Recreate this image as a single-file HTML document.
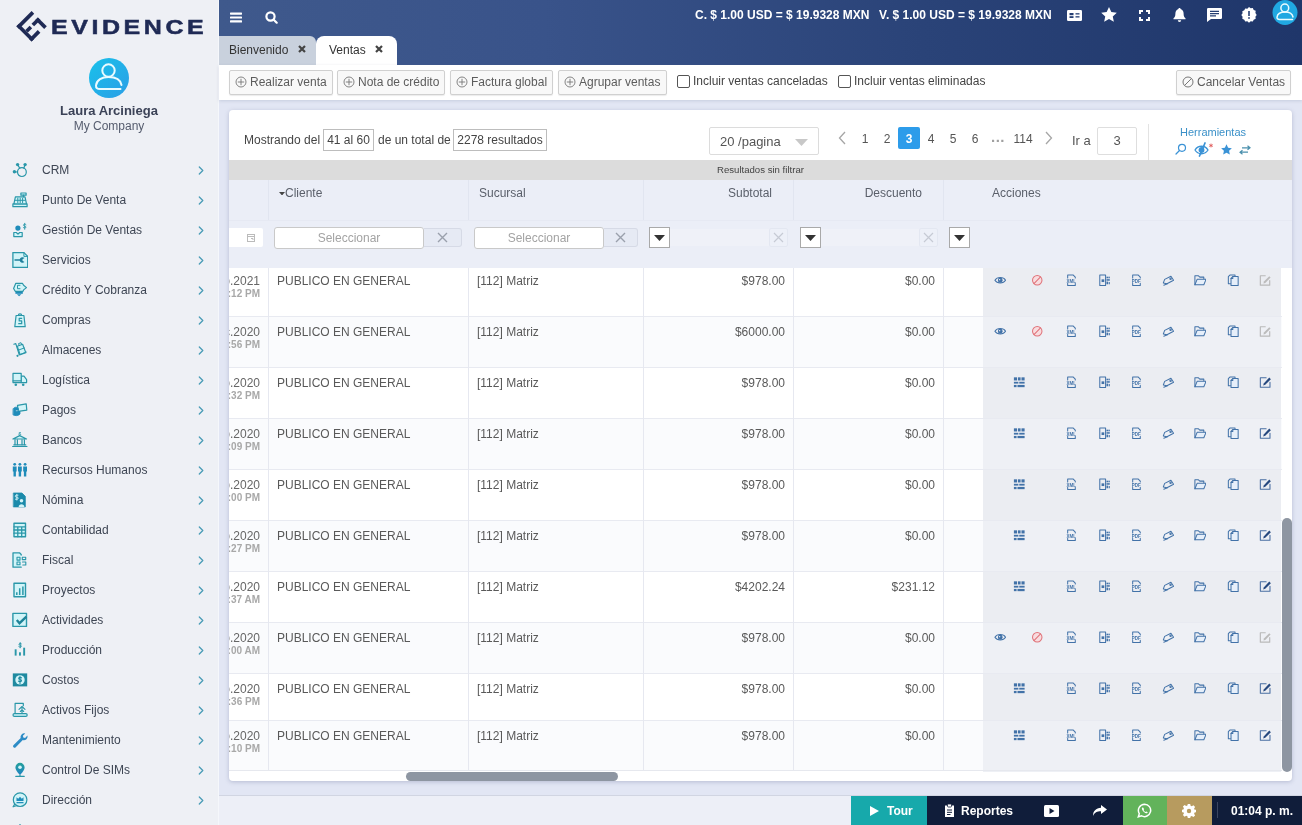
<!DOCTYPE html>
<html lang="es"><head><meta charset="utf-8"><title>Evidence - Ventas</title>
<style>
*{box-sizing:border-box;margin:0;padding:0}
html,body{width:1302px;height:825px;overflow:hidden}
#side,#top,#tb,#card,.bb{will-change:transform}
body{font-family:"Liberation Sans",Arial,sans-serif;font-size:12px;color:#4a4a4a;position:relative;background:#e2e6f4}
.abs{position:absolute}
#side{left:0;top:0;width:219px;height:825px;background:#eef0f5;border-right:1px solid #f5f7fb;overflow:hidden}
#logo-t{left:50.5px;top:12px;-webkit-text-stroke:.5px #1f2a55;font-size:20px;font-weight:700;color:#1f2a55;letter-spacing:2.85px;white-space:nowrap;line-height:30px;transform-origin:0 50%;transform:scaleX(1.25)}
#uname{left:0;width:218px;top:103px;text-align:center;font-weight:700;font-size:13px;color:#3b4257;line-height:15px}
#ucomp{left:0;width:218px;top:119px;text-align:center;font-size:12px;color:#555c6e;line-height:14px}
.mi{position:absolute;left:0;width:219px;height:30px}
.mi svg.i{position:absolute;left:11.5px;top:7px}
.mi span{position:absolute;left:42px;top:0;line-height:30px;font-size:12px;color:#3e4654;white-space:nowrap}
.mi svg.ch{position:absolute;left:197px;top:10px}
#top{left:219px;top:0;width:1083px;height:65px;background:linear-gradient(90deg,#3f598c 0%,#39538a 30%,#2a4378 65%,#1f366a 100%)}
#top .rate{position:absolute;top:8px;line-height:14px;font-size:12px;font-weight:700;color:#fff;white-space:nowrap}
.tab{position:absolute;top:36px;height:29px;line-height:28px;font-size:12px;color:#333;white-space:nowrap}
#tb{left:219px;top:65px;width:1083px;height:35px;background:#fff;box-shadow:0 1px 3px rgba(120,130,160,.25)}
.btn{position:absolute;top:5px;height:25px;border:1px solid #d0d0d0;background:#f8f8f8;border-radius:2px;font-size:12px;color:#5c5c5c;line-height:23px;white-space:nowrap;padding-left:20px;box-shadow:0 1px 1px rgba(0,0,0,.08)}
.btn svg{position:absolute;left:5px;top:5px}
.cb{position:absolute;top:10px;width:13px;height:13px;border:1px solid #555;border-radius:2px;background:#fff}
.cbl{position:absolute;top:0;line-height:33px;font-size:12px;color:#444;white-space:nowrap}
#card{left:229px;top:110px;width:1063px;height:671px;background:#fff;border-radius:4px;box-shadow:0 1px 4px rgba(100,110,150,.35);overflow:hidden}
.box{position:absolute;border:1px solid #bdbdbd;height:22px;line-height:20px;text-align:center;color:#444;font-size:12px;white-space:nowrap}
.pg{position:absolute;top:17px;width:22px;height:22px;line-height:24px;text-align:center;font-size:12px;color:#555}
#strip{left:0;top:50px;width:1063px;height:20px;background:#dcdcdc}
#hdr{left:0;top:70px;width:1063px;height:40px;background:#ebeef7}
#flt{left:0;top:110px;width:1063px;height:48px;z-index:2;background:#ebeef7;border-top:1px solid #e6e9f3}
.hc{position:absolute;top:0;line-height:26px;font-size:12px;color:#5a5f6a;white-space:nowrap}
.vl{position:absolute;top:70px;width:1px;height:591px;background:linear-gradient(#e1e5f0 0,#e1e5f0 88px,#e6e8f0 88px)}
.row{position:absolute;left:0;width:1053px;border-top:1px solid #e8eaf1}
.row div{position:absolute;white-space:nowrap;font-size:12px;color:#595959;line-height:14px}
.row .d1{right:1022px;top:8px;color:#666}
.row .d2{right:1022px;top:22px;font-size:10px;font-weight:700;color:#a8a8a8;line-height:12px}
.row .act{left:754px;top:0;width:298px;background:#ebedf3}
.row .act svg{position:absolute;top:8px}
#bot{left:219px;top:795px;width:1083px;height:30px;background:#edeff7;border-top:1px solid #d1d5e2}
.bb{position:absolute;top:796px;height:29px;color:#fff;font-weight:700;font-size:12px;line-height:31px;white-space:nowrap}
</style></head><body>
<div id="side" class="abs"><svg class="abs" style="left:14px;top:9px" width="35" height="35" viewBox="-17.5 -17.5 35 35"><g transform="translate(0.1,-0.2) rotate(-45)" fill="#1f2a55"><rect x="-10.75" y="-10.75" width="21.5" height="3.7"/><rect x="-10.75" y="-10.75" width="3.7" height="21.5"/><rect x="-10.75" y="7.05" width="12.4" height="3.7"/><rect x="-7.05" y="-1.85" width="6" height="3.7"/><rect x="1.75" y="-1.85" width="9" height="3.7"/><rect x="7.05" y="-1.85" width="3.7" height="12.6"/></g></svg><div id="logo-t" class="abs">EVIDENCE</div><svg class="abs" style="left:89px;top:58px" width="40" height="40" viewBox="0 0 40 40"><defs><linearGradient id="ag" x1="0" y1="0" x2="1" y2="1"><stop offset="0" stop-color="#19c1ea"/><stop offset="1" stop-color="#2b9ee6"/></linearGradient><linearGradient id="pg" x1="0" y1="0" x2="0" y2="1"><stop offset="0" stop-color="#25a09a"/><stop offset="1" stop-color="#1f84c4"/></linearGradient></defs><circle cx="20" cy="20" r="20" fill="url(#ag)"/><g fill="none" stroke="#e9fbff" stroke-width="2" stroke-linecap="round"><circle cx="19.500" cy="12.500" r="6.200"/><path d="M32.500 27c-1-5.500-6.500-8-13-8S7.500 22 7 27.500c-.2 2.500 1.500 3.500 4 3.500h20.500"/></g></svg><div id="uname" class="abs">Laura Arciniega</div><div id="ucomp" class="abs">My Company</div><div class="mi" style="top:155px"><svg class="i" width="16" height="16" viewBox="0 0 16 16" fill="none" stroke="#2a97a9" stroke-width="1.2" stroke-linecap="round" stroke-linejoin="round"><circle cx="9.900" cy="10.100" r="4.400"/><path d="M5.600 2.600l2.200 3.700M13.100 2.600l-1.300 3.600M2.400 9.800l3.100.2"/><g fill="#2a97a9" stroke="none"><circle cx="5.600" cy="2.600" r="1.700"/><circle cx="13.100" cy="2.600" r="1.700"/><circle cx="2.400" cy="9.800" r="1.700"/></g></svg><span>CRM</span><svg class="ch" width="8" height="11" viewBox="0 0 8 11" fill="none" stroke="#4a9cb6" stroke-width="1.300" stroke-linecap="round" stroke-linejoin="round"><path d="M2.300 2l3.500 3.500L2.300 9"/></svg></div><div class="mi" style="top:185px"><svg class="i" width="16" height="16" viewBox="0 0 16 16" fill="none" stroke="#2a97a9" stroke-width="1.2" stroke-linecap="round" stroke-linejoin="round"><rect x=".9" y="11.900" width="14.200" height="2.800" fill="#d2f4f8"/><path d="M3.400 4.800h9.600l1.500 7.100H1.900z" fill="#d2f4f8"/><path d="M5.800 6.200v4.400M8.200 6.200v4.400M10.600 6.200v4.400M3.200 8.300h10" stroke-width="1"/><rect x="8.900" y="1" width="5.200" height="2.200" fill="#d2f4f8"/><path d="M11.500 3.200v1.600"/></svg><span>Punto De Venta</span><svg class="ch" width="8" height="11" viewBox="0 0 8 11" fill="none" stroke="#4a9cb6" stroke-width="1.300" stroke-linecap="round" stroke-linejoin="round"><path d="M2.300 2l3.500 3.500L2.300 9"/></svg></div><div class="mi" style="top:215px"><svg class="i" width="16" height="16" viewBox="0 0 16 16" fill="none" stroke="#2a97a9" stroke-width="1.2" stroke-linecap="round" stroke-linejoin="round"><circle cx="5.900" cy="6.100" r="2.600" fill="#1f8cba" stroke="none"/><path d="M14 2.600c-.5-.6-2.500-.7-2.600.5s2.600.8 2.600 2-2.200 1.100-2.800.4M12.700 1.300v6" stroke-width=".9"/><path d="M1.800 10.500h2.500l1.700 1.700 1.700-1.700h2.500v4.100H1.800z" fill="#d2f4f8"/></svg><span>Gestión De Ventas</span><svg class="ch" width="8" height="11" viewBox="0 0 8 11" fill="none" stroke="#4a9cb6" stroke-width="1.300" stroke-linecap="round" stroke-linejoin="round"><path d="M2.300 2l3.500 3.500L2.300 9"/></svg></div><div class="mi" style="top:245px"><svg class="i" width="16" height="16" viewBox="0 0 16 16" fill="none" stroke="#2a97a9" stroke-width="1.2" stroke-linecap="round" stroke-linejoin="round"><path d="M.9.600h11l3.800 3.800v11H.9z" fill="#d2f4f8" stroke-width="1.300"/><path d="M11.900.6v3.800h3.800" stroke-width="1"/><path d="M2.500 7.200h5.200a3 3 0 014.800-1.300l-2 1.300v1.600l2 1.300a3 3 0 01-4.800-1.300H2.500z" fill="#1f7f9c" stroke="none"/></svg><span>Servicios</span><svg class="ch" width="8" height="11" viewBox="0 0 8 11" fill="none" stroke="#4a9cb6" stroke-width="1.300" stroke-linecap="round" stroke-linejoin="round"><path d="M2.300 2l3.500 3.500L2.300 9"/></svg></div><div class="mi" style="top:275px"><svg class="i" width="16" height="16" viewBox="0 0 16 16" fill="none" stroke="#2a97a9" stroke-width="1.2" stroke-linecap="round" stroke-linejoin="round"><path d="M3.800 1.300h6.600l1.200 2 2.900 2.300-2.900 2.300-.6 1.400H3.200L1.600 6.500z" fill="#d2f4f8"/><path d="M8 3.300H5.500v3.400H8" stroke-width="1"/><rect x="3.400" y="9.900" width="7.400" height="1.900" fill="#1f8cba" stroke="none"/><path d="M4.800 12.300h4.600l-2.300 2z" fill="#1f8cba" stroke="none"/></svg><span>Crédito Y Cobranza</span><svg class="ch" width="8" height="11" viewBox="0 0 8 11" fill="none" stroke="#4a9cb6" stroke-width="1.300" stroke-linecap="round" stroke-linejoin="round"><path d="M2.300 2l3.500 3.500L2.300 9"/></svg></div><div class="mi" style="top:305px"><svg class="i" width="16" height="16" viewBox="0 0 16 16" fill="none" stroke="#2a97a9" stroke-width="1.2" stroke-linecap="round" stroke-linejoin="round"><path d="M4.100 3.500h7.800l1.300 11.200H2.800z" fill="#d2f4f8"/><path d="M6.300 3.500a1.700 1.700 0 013.400 0"/><path d="M9.700 6.300H7.200v2.600h2.500v2.800H6.700"/></svg><span>Compras</span><svg class="ch" width="8" height="11" viewBox="0 0 8 11" fill="none" stroke="#4a9cb6" stroke-width="1.300" stroke-linecap="round" stroke-linejoin="round"><path d="M2.300 2l3.500 3.500L2.300 9"/></svg></div><div class="mi" style="top:335px"><svg class="i" width="16" height="16" viewBox="0 0 16 16" fill="none" stroke="#2a97a9" stroke-width="1.2" stroke-linecap="round" stroke-linejoin="round"><path d="M1.800 2.200l2-.6 3.400 11"/><path d="M5.200 4.200l5.400-1.900 3.200 8.300-5.700 2.200z" fill="#d2f4f8"/><path d="M6.700 8l5.500-2M7.200 3.500l-.7-1.900 2.500-.9.800 2M7.200 12.800l7-2.700" stroke-width="1"/><circle cx="5.500" cy="13.800" r="1.100" fill="#2a97a9" stroke="none"/></svg><span>Almacenes</span><svg class="ch" width="8" height="11" viewBox="0 0 8 11" fill="none" stroke="#4a9cb6" stroke-width="1.300" stroke-linecap="round" stroke-linejoin="round"><path d="M2.300 2l3.500 3.500L2.300 9"/></svg></div><div class="mi" style="top:365px"><svg class="i" width="16" height="16" viewBox="0 0 16 16" fill="none" stroke="#2a97a9" stroke-width="1.2" stroke-linecap="round" stroke-linejoin="round"><path d="M9.200 4.200h2.800l2.600 3.400v3H9.200z" fill="#d2f4f8"/><path d="M1 8.800v1.800h8.200"/><rect x="1" y="1.400" width="8.200" height="7.400" fill="#d2f4f8"/><circle cx="3.800" cy="12.800" r="1.300" fill="#2a97a9" stroke="none"/><circle cx="11.200" cy="12.800" r="1.300" fill="#2a97a9" stroke="none"/></svg><span>Logística</span><svg class="ch" width="8" height="11" viewBox="0 0 8 11" fill="none" stroke="#4a9cb6" stroke-width="1.300" stroke-linecap="round" stroke-linejoin="round"><path d="M2.300 2l3.500 3.500L2.300 9"/></svg></div><div class="mi" style="top:395px"><svg class="i" width="16" height="16" viewBox="0 0 16 16" fill="none" stroke="#2a97a9" stroke-width="1.2" stroke-linecap="round" stroke-linejoin="round"><path d="M5.500 3.300l8.700-1.500.6 6.300-8.500 1.300z" fill="#d2f4f8"/><path d="M1.300 6.500c1.500-1.800 4-1.800 5 0v1.500H4.500c-1 0-1 1.500 0 1.500h3.500v2.500c-1.500 2-5 2-6.700 1z" fill="#1f8cba" stroke="#1f8cba" stroke-width=".8"/></svg><span>Pagos</span><svg class="ch" width="8" height="11" viewBox="0 0 8 11" fill="none" stroke="#4a9cb6" stroke-width="1.300" stroke-linecap="round" stroke-linejoin="round"><path d="M2.300 2l3.500 3.500L2.300 9"/></svg></div><div class="mi" style="top:425px"><svg class="i" width="16" height="16" viewBox="0 0 16 16" fill="none" stroke="#2a97a9" stroke-width="1.2" stroke-linecap="round" stroke-linejoin="round"><path d="M7.700 3.600l6.800 3.400H.9z" fill="#d2f4f8"/><path d="M8.700.6c-.5-.4-1.800-.3-1.800.5s1.800.4 1.800 1.200-1.300.8-1.900.3" stroke-width=".9"/><path d="M3 7.800v4.900M5.400 7.800v4.900M10 7.800v4.900M12.400 7.800v4.900"/><path d="M.6 14.500h14.400M1.800 12.900h12" stroke-width="1.100"/></svg><span>Bancos</span><svg class="ch" width="8" height="11" viewBox="0 0 8 11" fill="none" stroke="#4a9cb6" stroke-width="1.300" stroke-linecap="round" stroke-linejoin="round"><path d="M2.300 2l3.500 3.500L2.300 9"/></svg></div><div class="mi" style="top:455px"><svg class="i" width="16" height="16" viewBox="0 0 16 16" fill="none" stroke="#2a97a9" stroke-width="1.2" stroke-linecap="round" stroke-linejoin="round"><g fill="#1f8cba" stroke="none"><circle cx="2.700" cy="2.300" r="1.400"/><circle cx="7.900" cy="2.300" r="1.400"/><circle cx="13.100" cy="2.300" r="1.400"/><path d="M.8 4.400h3.800v5.200h-.7v5H1.500v-5H.8zM6 4.400h3.800v5.200h-.7v5H6.700v-5H6zM11.200 4.400H15v5.200h-.7v5h-2.400v-5h-.7z"/></g></svg><span>Recursos Humanos</span><svg class="ch" width="8" height="11" viewBox="0 0 8 11" fill="none" stroke="#4a9cb6" stroke-width="1.300" stroke-linecap="round" stroke-linejoin="round"><path d="M2.300 2l3.500 3.500L2.300 9"/></svg></div><div class="mi" style="top:485px"><svg class="i" width="16" height="16" viewBox="0 0 16 16" fill="none" stroke="#2a97a9" stroke-width="1.2" stroke-linecap="round" stroke-linejoin="round"><path d="M1.700 1h8.300l3.300 3.300v10.600H1.700z" fill="#1b8aaa" stroke="#1b8aaa" stroke-width=".8"/><path d="M6 3.200H4.300a1 1 0 000 2h.9a1 1 0 010 2H3.400M4.800 2.300v5.800" stroke="#d2f4f8" stroke-width=".9"/><circle cx="9.500" cy="8.800" r="1.800" fill="#d2f4f8" stroke="none"/><path d="M6.600 14.900c0-3.700 5.800-3.700 5.800 0z" fill="#d2f4f8" stroke="none"/></svg><span>Nómina</span><svg class="ch" width="8" height="11" viewBox="0 0 8 11" fill="none" stroke="#4a9cb6" stroke-width="1.300" stroke-linecap="round" stroke-linejoin="round"><path d="M2.300 2l3.500 3.500L2.300 9"/></svg></div><div class="mi" style="top:515px"><svg class="i" width="16" height="16" viewBox="0 0 16 16" fill="none" stroke="#2a97a9" stroke-width="1.2" stroke-linecap="round" stroke-linejoin="round"><rect x="2" y="1.300" width="11.500" height="13.400" fill="#d2f4f8" stroke-width="1.400"/><path d="M2 4.800h11.500M2 8h11.500M2 11.200h11.500M5.800 4.800v9.900M9.700 4.800v9.900" stroke-width="1.300"/></svg><span>Contabilidad</span><svg class="ch" width="8" height="11" viewBox="0 0 8 11" fill="none" stroke="#4a9cb6" stroke-width="1.300" stroke-linecap="round" stroke-linejoin="round"><path d="M2.300 2l3.500 3.500L2.300 9"/></svg></div><div class="mi" style="top:545px"><svg class="i" width="16" height="16" viewBox="0 0 16 16" fill="none" stroke="#2a97a9" stroke-width="1.2" stroke-linecap="round" stroke-linejoin="round"><path d="M9.200 3v-.5L7.500.8H1v14.400h8.200" fill="#d2f4f8" stroke-width="1.300"/><rect x="5" y="5.300" width="3" height="2.800" stroke-width="1.100"/><rect x="10.300" y="5.300" width="3.400" height="2.300" stroke-width="1.100"/><rect x="5" y="10" width="3" height="2.800" stroke-width="1.100"/><path d="M10.500 10h3.300v3h-3" stroke-width="1.100"/></svg><span>Fiscal</span><svg class="ch" width="8" height="11" viewBox="0 0 8 11" fill="none" stroke="#4a9cb6" stroke-width="1.300" stroke-linecap="round" stroke-linejoin="round"><path d="M2.300 2l3.500 3.500L2.300 9"/></svg></div><div class="mi" style="top:575px"><svg class="i" width="16" height="16" viewBox="0 0 16 16" fill="none" stroke="#2a97a9" stroke-width="1.2" stroke-linecap="round" stroke-linejoin="round"><rect x="2" y="1.300" width="11.500" height="13.400" fill="#d2f4f8" stroke-width="1.400"/><path d="M4.800 10.300V13M7.700 6.300V13M10.900 4.400V13" stroke-width="1.500" stroke-linecap="butt"/></svg><span>Proyectos</span><svg class="ch" width="8" height="11" viewBox="0 0 8 11" fill="none" stroke="#4a9cb6" stroke-width="1.300" stroke-linecap="round" stroke-linejoin="round"><path d="M2.300 2l3.500 3.500L2.300 9"/></svg></div><div class="mi" style="top:605px"><svg class="i" width="16" height="16" viewBox="0 0 16 16" fill="none" stroke="#2a97a9" stroke-width="1.2" stroke-linecap="round" stroke-linejoin="round"><rect x=".9" y="1.400" width="13.600" height="13" fill="#d2f4f8" stroke-width="1.400"/><path d="M4.800 8l2.700 3.200 6.900-6.600" stroke-width="2.300" stroke="#1f8398" stroke-linecap="butt" stroke-linejoin="miter"/></svg><span>Actividades</span><svg class="ch" width="8" height="11" viewBox="0 0 8 11" fill="none" stroke="#4a9cb6" stroke-width="1.300" stroke-linecap="round" stroke-linejoin="round"><path d="M2.300 2l3.500 3.500L2.300 9"/></svg></div><div class="mi" style="top:635px"><svg class="i" width="16" height="16" viewBox="0 0 16 16" fill="none" stroke="#2a97a9" stroke-width="1.2" stroke-linecap="round" stroke-linejoin="round"><g fill="#2a97a9" stroke="none"><rect x="2.700" y="7.300" width="1.900" height="6.300"/><rect x="7" y="10.300" width="1.900" height="3.300"/><rect x="11.200" y="5.700" width="1.900" height="7.900"/></g><path d="M9.400 1.800c-.6-.6-2.400-.5-2.400.6s2.400.5 2.400 1.700-1.800 1.200-2.600.5M8.200.6v5.200" stroke-width="1"/></svg><span>Producción</span><svg class="ch" width="8" height="11" viewBox="0 0 8 11" fill="none" stroke="#4a9cb6" stroke-width="1.300" stroke-linecap="round" stroke-linejoin="round"><path d="M2.300 2l3.500 3.500L2.300 9"/></svg></div><div class="mi" style="top:665px"><svg class="i" width="16" height="16" viewBox="0 0 16 16" fill="none" stroke="#2a97a9" stroke-width="1.2" stroke-linecap="round" stroke-linejoin="round"><rect x=".8" y="1.400" width="14.400" height="13" fill="#1f8aa0" stroke="none"/><circle cx="8" cy="7.900" r="4.700" fill="#d2f4f8" stroke="none"/><path d="M9.500 5.800c-.5-.6-2.800-.7-2.800.7s2.800.7 2.800 2.100-2.300 1.300-3 .5M8 4.200v7.400" stroke="#1f8aa0" stroke-width="1.100"/></svg><span>Costos</span><svg class="ch" width="8" height="11" viewBox="0 0 8 11" fill="none" stroke="#4a9cb6" stroke-width="1.300" stroke-linecap="round" stroke-linejoin="round"><path d="M2.300 2l3.500 3.500L2.300 9"/></svg></div><div class="mi" style="top:695px"><svg class="i" width="16" height="16" viewBox="0 0 16 16" fill="none" stroke="#2a97a9" stroke-width="1.2" stroke-linecap="round" stroke-linejoin="round"><path d="M3.100 11.400V1.400h8.200v2.300" /><rect x="1" y="11.600" width="14.200" height="2.800" rx="1.400" fill="#d2f4f8"/><path d="M7 7.300l3-2.800 3 2.800M8.300 9.500L10 7.800l1.700 1.700M10 6v5.500" stroke-width="1.100"/></svg><span>Activos Fijos</span><svg class="ch" width="8" height="11" viewBox="0 0 8 11" fill="none" stroke="#4a9cb6" stroke-width="1.300" stroke-linecap="round" stroke-linejoin="round"><path d="M2.300 2l3.500 3.500L2.300 9"/></svg></div><div class="mi" style="top:725px"><svg class="i" width="16" height="16" viewBox="0 0 16 16" fill="none" stroke="#2a97a9" stroke-width="1.2" stroke-linecap="round" stroke-linejoin="round"><path d="M1.400 13.300l7.300-7.300a3.700 3.700 0 014.500-4.600l-2.300 2.300.4 1.800 1.800.4 2.300-2.300a3.700 3.700 0 01-4.600 4.500l-7.300 7.300a1.500 1.500 0 01-2.100-2.100z" fill="#2d8cc6" stroke="none"/></svg><span>Mantenimiento</span><svg class="ch" width="8" height="11" viewBox="0 0 8 11" fill="none" stroke="#4a9cb6" stroke-width="1.300" stroke-linecap="round" stroke-linejoin="round"><path d="M2.300 2l3.500 3.500L2.300 9"/></svg></div><div class="mi" style="top:755px"><svg class="i" width="16" height="16" viewBox="0 0 16 16" fill="none" stroke="#2a97a9" stroke-width="1.2" stroke-linecap="round" stroke-linejoin="round"><path d="M8 .8a4.600 4.600 0 00-4.600 4.600c0 3.400 4.600 7.400 4.600 7.400s4.600-4 4.600-7.400A4.600 4.600 0 008 .8z" fill="url(#pg)" stroke="none"/><circle cx="8" cy="5.200" r="1.800" fill="#d2f4f8" stroke="none"/><path d="M3.800 14.400h8.400M8 12.800v1.600"/></svg><span>Control De SIMs</span><svg class="ch" width="8" height="11" viewBox="0 0 8 11" fill="none" stroke="#4a9cb6" stroke-width="1.300" stroke-linecap="round" stroke-linejoin="round"><path d="M2.300 2l3.500 3.500L2.300 9"/></svg></div><div class="mi" style="top:785px"><svg class="i" width="16" height="16" viewBox="0 0 16 16" fill="none" stroke="#2a97a9" stroke-width="1.2" stroke-linecap="round" stroke-linejoin="round"><circle cx="8.100" cy="7.700" r="6.800" fill="#d2f4f8"/><path d="M2.600 12.200l-1.500 2.600 3.300-1"/><path d="M4.500 5.300l1.700 1.500L8 4.800l1.800 2 1.700-1.500v3.800H4.500zM4.500 10h7v1.300h-7z" fill="#1f8cba" stroke="none"/></svg><span>Dirección</span><svg class="ch" width="8" height="11" viewBox="0 0 8 11" fill="none" stroke="#4a9cb6" stroke-width="1.300" stroke-linecap="round" stroke-linejoin="round"><path d="M2.300 2l3.500 3.500L2.300 9"/></svg></div><div class="mi" style="top:815px"><svg class="i" width="16" height="16" viewBox="0 0 24 24" fill="none" stroke="#2a97a9" stroke-width="1.800"><circle cx="12" cy="12" r="3"/><path d="M12 3v3M12 18v3M3 12h3M18 12h3M5.600 5.600l2 2M16.400 16.400l2 2M5.600 18.400l2-2M16.400 7.600l2-2"/></svg><span>Configuración</span></div></div>
<div id="top" class="abs"><svg class="abs" style="left:11px;top:12px" width="12" height="11" viewBox="0 0 12 11" fill="#fff"><rect y="0.500" width="12" height="2.200" rx=".6"/><rect y="4.400" width="12" height="2.200" rx=".6"/><rect y="8.300" width="12" height="2.200" rx=".6"/></svg><svg class="abs" style="left:46px;top:11px" width="13" height="13" viewBox="0 0 13 13" fill="none" stroke="#fff" stroke-width="2.200" stroke-linecap="round"><circle cx="5.500" cy="5.500" r="4.100"/><path d="M8.700 8.700l3 3"/></svg><div class="rate" style="left:476px">C. $ 1.00 USD = $ 19.9328 MXN</div><div class="rate" style="left:660px">V. $ 1.00 USD = $ 19.9328 MXN</div><svg class="abs" style="left:848px;top:10px" width="15" height="11" viewBox="0 0 15 11"><rect width="15" height="11" rx="1.200" fill="#fff"/><g fill="#263f73"><rect x="2.500" y="3" width="4" height="2.200"/><rect x="2.500" y="6.200" width="4" height="1.800"/><rect x="8.500" y="3.200" width="4" height="1.300"/><rect x="8.500" y="6.200" width="4" height="1.300"/></g></svg><svg class="abs" style="left:882px;top:7px" width="16" height="15" viewBox="0 0 16 15" fill="#fff"><path d="M8 0l2.350 5.050 5.450.600-4.050 3.750 1.100 5.450L8 12.100 3.150 14.850l1.100-5.450L.200 5.650l5.450-.6z"/></svg><svg class="abs" style="left:920px;top:10px" width="11" height="11" viewBox="0 0 11 11" fill="none" stroke="#fff" stroke-width="2"><path d="M1 4V1h3M7 1h3v3M10 7v3H7M4 10H1V7"/></svg><svg class="abs" style="left:954px;top:8px" width="13" height="14" viewBox="0 0 13 14" fill="#fff"><path d="M6.500 0c.7 0 1.100.5 1.100 1.100 2 .6 3 2.300 3 4.400 0 2.500.6 3.700 1.900 4.800v1H.5v-1c1.300-1.100 1.900-2.300 1.900-4.800 0-2.100 1-3.800 3-4.400C5.400.5 5.800 0 6.500 0zM4.800 12.200h3.400a1.700 1.700 0 01-3.400 0z"/></svg><svg class="abs" style="left:988px;top:8px" width="15" height="14" viewBox="0 0 15 14"><path d="M1.200 0h12.600A1.200 1.200 0 0115 1.200v8.600a1.200 1.200 0 01-1.200 1.200H4L0 14V1.200A1.200 1.200 0 011.200 0z" fill="#fff"/><g stroke="#263f73" stroke-width="1.200"><path d="M3 3.300h9M3 5.600h9M3 7.900h6"/></g></svg><svg class="abs" style="left:1022px;top:7px" width="16" height="16" viewBox="0 0 16 16"><path d="M8 0l1.700 1.300 2.100-.3.900 1.900 2 .9-.3 2.100L15.700 8l-1.300 1.700.3 2.100-2 .9-.9 1.900-2.100-.3L8 15.700l-1.700-1.400-2.100.3-.9-1.900-2-.9.300-2.100L.3 8l1.300-1.700-.3-2.100 2-.9.900-1.900 2.100.3z" fill="#fff"/><rect x="7.200" y="4" width="1.600" height="5" fill="#263f73"/><rect x="7.200" y="10.200" width="1.600" height="1.600" fill="#263f73"/></svg><svg class="abs" style="left:1053px;top:0" width="26" height="26" viewBox="0 0 26 26"><circle cx="13" cy="12.500" r="12.500" fill="#20a8e2"/><g fill="none" stroke="#e9fbff" stroke-width="1.500" stroke-linecap="round"><circle cx="12.800" cy="8" r="3.900"/><path d="M21 17c-.6-3.400-4-5-8-5s-7.600 1.800-8 5.300c-.1 1.500.9 2.100 2.500 2.100H20.500"/></g></svg><div class="tab" style="left:0;width:97px;background:#c9d1dd;border-radius:0 6px 0 0;padding-left:10px">Bienvenido</div><div class="tab" style="left:97px;width:81px;background:#fff;border-radius:8px 8px 0 0;padding-left:13px">Ventas</div><svg class="abs" style="left:79px;top:45px" width="8" height="8" viewBox="0 0 8 8" stroke="#444" stroke-width="2.200" stroke-linecap="butt"><path d="M1 1l6 6M7 1L1 7"/></svg><svg class="abs" style="left:156px;top:45px" width="8" height="8" viewBox="0 0 8 8" stroke="#444" stroke-width="2.200" stroke-linecap="butt"><path d="M1 1l6 6M7 1L1 7"/></svg></div>
<div id="tb" class="abs"><div class="btn" style="left:10px;width:104px"><svg width="12" height="12" viewBox="0 0 12 12" fill="none" stroke="#777" stroke-width=".9"><circle cx="6" cy="6" r="5"/><path d="M6 2.800v6.400M2.800 6h6.400"/></svg>Realizar venta</div><div class="btn" style="left:118px;width:108px"><svg width="12" height="12" viewBox="0 0 12 12" fill="none" stroke="#777" stroke-width=".9"><circle cx="6" cy="6" r="5"/><path d="M6 2.800v6.400M2.800 6h6.400"/></svg>Nota de crédito</div><div class="btn" style="left:231px;width:103px"><svg width="12" height="12" viewBox="0 0 12 12" fill="none" stroke="#777" stroke-width=".9"><circle cx="6" cy="6" r="5"/><path d="M6 2.800v6.400M2.800 6h6.400"/></svg>Factura global</div><div class="btn" style="left:339px;width:109px"><svg width="12" height="12" viewBox="0 0 12 12" fill="none" stroke="#777" stroke-width=".9"><circle cx="6" cy="6" r="5"/><path d="M6 2.800v6.400M2.800 6h6.400"/></svg>Agrupar ventas</div><div class="cb" style="left:458px"></div><div class="cbl" style="left:474px">Incluir ventas canceladas</div><div class="cb" style="left:619px"></div><div class="cbl" style="left:635px">Incluir ventas eliminadas</div><div class="btn" style="left:957px;width:115px"><svg width="12" height="12" viewBox="0 0 12 12" fill="none" stroke="#777" stroke-width="1"><circle cx="6" cy="6" r="5"/><path d="M2.500 9.500l7-7"/></svg>Cancelar Ventas</div></div>
<div id="card" class="abs"><div class="abs" style="left:15px;top:19px;line-height:22px;font-size:12px;color:#444;white-space:nowrap">Mostrando del</div><div class="box" style="left:94px;top:19px;width:51px">41 al 60</div><div class="abs" style="left:149px;top:19px;line-height:22px;font-size:12px;color:#444;white-space:nowrap">de un total de</div><div class="box" style="left:224px;top:19px;width:94px">2278 resultados</div><div class="abs" style="left:480px;top:17px;width:110px;height:28px;border:1px solid #dcdcdc;border-radius:2px;background:#fff"><span class="abs" style="left:10px;top:0;line-height:27px;font-size:13px;color:#555;white-space:nowrap">20 /pagina</span><svg class="abs" style="left:85px;top:11px" width="13" height="7" viewBox="0 0 13 7"><path d="M0 0h13L6.500 7z" fill="#c8c8c8"/></svg></div><svg class="abs" style="left:609px;top:21px" width="8" height="14" viewBox="0 0 8 14" fill="none" stroke="#a6a6a6" stroke-width="1.300"><path d="M7 1L1.500 7 7 13"/></svg><div class="pg" style="left:625px">1</div><div class="pg" style="left:647px">2</div><div class="pg" style="left:669px;background:#2d9cea;color:#fff;font-weight:700;border-radius:2px">3</div><div class="pg" style="left:691px">4</div><div class="pg" style="left:713px">5</div><div class="pg" style="left:735px">6</div><div class="pg" style="left:758px;font-weight:700;font-size:15px;color:#a0a0a0;letter-spacing:.5px;top:15px">...</div><div class="pg" style="left:778px;width:32px">114</div><svg class="abs" style="left:816px;top:21px" width="8" height="14" viewBox="0 0 8 14" fill="none" stroke="#a6a6a6" stroke-width="1.300"><path d="M1 1l5.500 6L1 13"/></svg><div class="abs" style="left:843px;top:18px;line-height:26px;font-size:13px;color:#555">Ir a</div><div class="abs" style="left:868px;top:17px;width:40px;height:28px;border:1px solid #dedede;border-radius:2px;text-align:center;line-height:26px;font-size:13px;color:#555">3</div><div class="abs" style="left:919px;top:14px;width:1px;height:36px;background:#e3e3e3"></div><div class="abs" style="left:951px;top:16px;line-height:13px;font-size:11px;color:#3a90c8;white-space:nowrap">Herramientas</div><svg class="abs" style="left:946px;top:33px" width="12" height="12" viewBox="0 0 12 12" fill="none" stroke="#3b93d6" stroke-width="1.200" stroke-linecap="round"><circle cx="7" cy="4.800" r="3.500"/><path d="M4.500 7.500L1 11"/></svg><svg class="abs" style="left:965px;top:32px" width="20" height="15" viewBox="0 0 20 15" fill="none" stroke="#3b93d6" stroke-width="1.300" stroke-linecap="round"><path d="M1 8c3-5 10-5 13 0-3 5-10 5-13 0z"/><circle cx="7.500" cy="8" r="2.300" fill="#3b93d6"/><path d="M11 1L5.500 14" stroke-width="1.700"/><path d="M17 2v3M15.600 2.800l2.800 1.500M18.400 2.800l-2.800 1.500" stroke="#e05a5a" stroke-width=".9"/></svg><svg class="abs" style="left:992px;top:34px" width="11" height="11" viewBox="0 0 16 15" fill="#3b93d6"><path d="M8 0l2.350 5.050 5.450.600-4.050 3.750 1.100 5.450L8 12.100 3.150 14.850l1.100-5.450L.200 5.650l5.450-.6z"/></svg><svg class="abs" style="left:1010px;top:35px" width="12" height="10" viewBox="0 0 12 10" fill="none" stroke="#4a90ad" stroke-width="1.200"><path d="M3 2.800h8M8.500.800l2.500 2-2.500 2M9 7.200H1M3.500 5.200L1 7.200l2.500 2"/></svg><div id="strip" class="abs"><span class="abs" style="left:488px;top:0;line-height:20px;font-size:9.600px;color:#444;white-space:nowrap">Resultados sin filtrar</span></div><div id="hdr" class="abs"><svg class="abs" style="left:50px;top:11.500px" width="6" height="3.500" viewBox="0 0 7 4"><path d="M0 0h7L3.500 4z" fill="#444"/></svg><div class="hc" style="left:56px">Cliente</div><div class="hc" style="left:250px">Sucursal</div><div class="hc" style="right:520px">Subtotal</div><div class="hc" style="right:370px">Descuento</div><div class="hc" style="left:763px">Acciones</div></div><div id="flt" class="abs"><div class="abs" style="left:-4px;top:7px;width:38px;height:19px;background:#fff;border-radius:2px"></div><svg class="abs" style="left:18px;top:12px" width="8" height="9" viewBox="0 0 8 9" fill="none" stroke="#bbb" stroke-width="1"><rect x=".5" y="1.500" width="7" height="7"/><path d="M.5 3.500h7M4 5.500h2v1.500"/></svg><div class="abs" style="left:45px;top:6px;width:150px;height:22px;border:1px solid #c9c9c9;border-radius:3px;background:#fff;text-align:center;line-height:20px;font-size:12px;color:#a3a3a3">Seleccionar</div><div class="abs" style="left:195px;top:7px;width:38px;height:19px;border:1px solid #d6dae6;border-left:none;border-radius:0 3px 3px 0;background:#e6eaf4"></div><svg class="abs" style="left:208px;top:11px" width="11" height="11" viewBox="0 0 11 11" stroke="#9aa0ac" stroke-width="1.400"><path d="M1 1l9 9M10 1l-9 9"/></svg><div class="abs" style="left:245px;top:6px;width:130px;height:22px;border:1px solid #c9c9c9;border-radius:3px;background:#fff;text-align:center;line-height:20px;font-size:12px;color:#a3a3a3">Seleccionar</div><div class="abs" style="left:375px;top:7px;width:34px;height:19px;border:1px solid #d6dae6;border-left:none;border-radius:0 3px 3px 0;background:#e6eaf4"></div><svg class="abs" style="left:386px;top:11px" width="11" height="11" viewBox="0 0 11 11" stroke="#9aa0ac" stroke-width="1.400"><path d="M1 1l9 9M10 1l-9 9"/></svg><div class="abs" style="left:441px;top:8px;width:100px;height:17px;background:rgba(255,255,255,.22)"></div><div class="abs" style="left:592px;top:8px;width:99px;height:17px;background:rgba(255,255,255,.22)"></div><div class="abs" style="left:420px;top:6px;width:21px;height:21px;border:1px solid #a9a9a9;background:#fff"></div><svg class="abs" style="left:425px;top:14px" width="11" height="6" viewBox="0 0 11 6"><path d="M0 0h11L5.500 6z" fill="#333"/></svg><div class="abs" style="left:571px;top:6px;width:21px;height:21px;border:1px solid #a9a9a9;background:#fff"></div><svg class="abs" style="left:576px;top:14px" width="11" height="6" viewBox="0 0 11 6"><path d="M0 0h11L5.500 6z" fill="#333"/></svg><div class="abs" style="left:720px;top:6px;width:21px;height:21px;border:1px solid #a9a9a9;background:#fff"></div><svg class="abs" style="left:725px;top:14px" width="11" height="6" viewBox="0 0 11 6"><path d="M0 0h11L5.500 6z" fill="#333"/></svg><div class="abs" style="left:540px;top:7px;width:19px;height:19px;border:1px solid #e3e7f1;border-radius:2px;background:#edf0f8"></div><svg class="abs" style="left:544px;top:11px" width="11" height="11" viewBox="0 0 11 11" stroke="#c6cad4" stroke-width="1.200"><path d="M1 1l9 9M10 1l-9 9"/></svg><div class="abs" style="left:690px;top:7px;width:19px;height:19px;border:1px solid #e3e7f1;border-radius:2px;background:#edf0f8"></div><svg class="abs" style="left:694px;top:11px" width="11" height="11" viewBox="0 0 11 11" stroke="#c6cad4" stroke-width="1.200"><path d="M1 1l9 9M10 1l-9 9"/></svg></div><div class="row" style="top:155px;height:51px;background:#fff"><div class="d1">05.Feb.2021</div><div class="d2">01:12 PM</div><div style="left:48px;top:8px">PUBLICO EN GENERAL</div><div style="left:248px;top:8px">[112] Matriz</div><div style="right:497px;top:8px">$978.00</div><div style="right:347px;top:8px">$0.00</div><div class="act" style="height:51px;background:#ebedf2"><svg style="left:10.75px" width="12.5" height="12.5" viewBox="0 0 14 14" fill="none" stroke="#4272a8" stroke-width="1.15" stroke-linecap="round" stroke-linejoin="round"><path d="M1 7c2.500-4 9.500-4 12 0-2.500 4-9.500 4-12 0z"/><circle cx="7" cy="7" r="2.100" fill="#4272a8"/><circle cx="6.300" cy="6.300" r=".8" fill="#ebedf3" stroke="none"/></svg><svg style="left:47.75px" width="12.5" height="12.5" viewBox="0 0 14 14" fill="none" stroke="#e0737a" stroke-width="1.15" stroke-linecap="round" stroke-linejoin="round"><circle cx="7" cy="7" r="5.300" fill="#f8dcdf"/><path d="M3.300 10.700l7.400-7.400"/></svg><svg style="left:81.75px" width="12.5" height="12.5" viewBox="0 0 14 14" fill="none" stroke="#4272a8" stroke-width="1.15" stroke-linecap="round" stroke-linejoin="round"><path d="M3 4.500V1h6l2.500 2.500v1M3 10.500V13h8.500v-2.500"/><text x="7" y="9.700" font-size="5" font-family="Liberation Sans,sans-serif" font-weight="700" text-anchor="middle" fill="#4272a8" stroke="none">XML</text></svg><svg style="left:114.75px" width="12.5" height="12.5" viewBox="0 0 14 14" fill="none" stroke="#4272a8" stroke-width="1.15" stroke-linecap="round" stroke-linejoin="round"><path d="M2 1h6.500v12H2z"/><g fill="#4272a8" stroke="none"><rect x="9.500" y="3" width="1.800" height="1.800"/><rect x="11.700" y="3" width="1.500" height="1.800"/><rect x="9.500" y="5.800" width="3.700" height="1.700"/><rect x="9.500" y="8.500" width="1.800" height="3"/><rect x="12" y="9" width="1.200" height="2.500"/><rect x="4" y="6" width="3" height="3"/></g></svg><svg style="left:146.75px" width="12.5" height="12.5" viewBox="0 0 14 14" fill="none" stroke="#4272a8" stroke-width="1.15" stroke-linecap="round" stroke-linejoin="round"><path d="M3 4.500V1h6l2.500 2.500v1M3 10.500V13h8.500v-2.500"/><text x="7" y="9.700" font-size="5" font-family="Liberation Sans,sans-serif" font-weight="700" text-anchor="middle" fill="#4272a8" stroke="none">PDF</text></svg><svg style="left:178.75px" width="12.5" height="12.5" viewBox="0 0 14 14" fill="none" stroke="#4272a8" stroke-width="1.15" stroke-linecap="round" stroke-linejoin="round"><path d="M1.500 10L3 6l7-3.500 3 4.500-7.500 4z"/><path d="M2 12.500l4-1.500"/><circle cx="9.600" cy="5.300" r=".8"/></svg><svg style="left:210.75px" width="12.5" height="12.5" viewBox="0 0 14 14" fill="none" stroke="#4272a8" stroke-width="1.15" stroke-linecap="round" stroke-linejoin="round"><path d="M1 12V2h4l1.500 1.500H11V6"/><path d="M1 12l2.500-6H13.500L11 12z" fill="#e6effa"/></svg><svg style="left:243.75px" width="12.5" height="12.5" viewBox="0 0 14 14" fill="none" stroke="#4272a8" stroke-width="1.15" stroke-linecap="round" stroke-linejoin="round"><path d="M4 10.800H1.500V3l2-2H9v1.800"/><path d="M4.500 5l2-2.200h6V13h-8z" fill="#e6effa"/><path d="M6.500 2.800V5h-2"/></svg><svg style="left:275.75px" width="12.5" height="12.5" viewBox="0 0 14 14" fill="none" stroke="#b9b9b9" stroke-width="1.15" stroke-linecap="round" stroke-linejoin="round"><path d="M12 7.500V12.500H1.500V2H7" stroke-width="1.300"/><path d="M5.500 8.500l6-6 1.500 1.500-6 6-2 .5z" fill="#bbb" stroke="none"/></svg></div></div><div class="row" style="top:206px;height:51px;background:#fafbfd"><div class="d1">28.Dic.2020</div><div class="d2">04:56 PM</div><div style="left:48px;top:8px">PUBLICO EN GENERAL</div><div style="left:248px;top:8px">[112] Matriz</div><div style="right:497px;top:8px">$6000.00</div><div style="right:347px;top:8px">$0.00</div><div class="act" style="height:51px;background:#eef0f5"><svg style="left:10.75px" width="12.5" height="12.5" viewBox="0 0 14 14" fill="none" stroke="#4272a8" stroke-width="1.15" stroke-linecap="round" stroke-linejoin="round"><path d="M1 7c2.500-4 9.500-4 12 0-2.500 4-9.500 4-12 0z"/><circle cx="7" cy="7" r="2.100" fill="#4272a8"/><circle cx="6.300" cy="6.300" r=".8" fill="#ebedf3" stroke="none"/></svg><svg style="left:47.75px" width="12.5" height="12.5" viewBox="0 0 14 14" fill="none" stroke="#e0737a" stroke-width="1.15" stroke-linecap="round" stroke-linejoin="round"><circle cx="7" cy="7" r="5.300" fill="#f8dcdf"/><path d="M3.300 10.700l7.400-7.400"/></svg><svg style="left:81.75px" width="12.5" height="12.5" viewBox="0 0 14 14" fill="none" stroke="#4272a8" stroke-width="1.15" stroke-linecap="round" stroke-linejoin="round"><path d="M3 4.500V1h6l2.500 2.500v1M3 10.500V13h8.500v-2.500"/><text x="7" y="9.700" font-size="5" font-family="Liberation Sans,sans-serif" font-weight="700" text-anchor="middle" fill="#4272a8" stroke="none">XML</text></svg><svg style="left:114.75px" width="12.5" height="12.5" viewBox="0 0 14 14" fill="none" stroke="#4272a8" stroke-width="1.15" stroke-linecap="round" stroke-linejoin="round"><path d="M2 1h6.500v12H2z"/><g fill="#4272a8" stroke="none"><rect x="9.500" y="3" width="1.800" height="1.800"/><rect x="11.700" y="3" width="1.500" height="1.800"/><rect x="9.500" y="5.800" width="3.700" height="1.700"/><rect x="9.500" y="8.500" width="1.800" height="3"/><rect x="12" y="9" width="1.200" height="2.500"/><rect x="4" y="6" width="3" height="3"/></g></svg><svg style="left:146.75px" width="12.5" height="12.5" viewBox="0 0 14 14" fill="none" stroke="#4272a8" stroke-width="1.15" stroke-linecap="round" stroke-linejoin="round"><path d="M3 4.500V1h6l2.500 2.500v1M3 10.500V13h8.500v-2.500"/><text x="7" y="9.700" font-size="5" font-family="Liberation Sans,sans-serif" font-weight="700" text-anchor="middle" fill="#4272a8" stroke="none">PDF</text></svg><svg style="left:178.75px" width="12.5" height="12.5" viewBox="0 0 14 14" fill="none" stroke="#4272a8" stroke-width="1.15" stroke-linecap="round" stroke-linejoin="round"><path d="M1.500 10L3 6l7-3.500 3 4.500-7.500 4z"/><path d="M2 12.500l4-1.500"/><circle cx="9.600" cy="5.300" r=".8"/></svg><svg style="left:210.75px" width="12.5" height="12.5" viewBox="0 0 14 14" fill="none" stroke="#4272a8" stroke-width="1.15" stroke-linecap="round" stroke-linejoin="round"><path d="M1 12V2h4l1.500 1.500H11V6"/><path d="M1 12l2.500-6H13.500L11 12z" fill="#e6effa"/></svg><svg style="left:243.75px" width="12.5" height="12.5" viewBox="0 0 14 14" fill="none" stroke="#4272a8" stroke-width="1.15" stroke-linecap="round" stroke-linejoin="round"><path d="M4 10.800H1.500V3l2-2H9v1.800"/><path d="M4.500 5l2-2.200h6V13h-8z" fill="#e6effa"/><path d="M6.500 2.800V5h-2"/></svg><svg style="left:275.75px" width="12.5" height="12.5" viewBox="0 0 14 14" fill="none" stroke="#b9b9b9" stroke-width="1.15" stroke-linecap="round" stroke-linejoin="round"><path d="M12 7.500V12.500H1.500V2H7" stroke-width="1.300"/><path d="M5.500 8.500l6-6 1.500 1.500-6 6-2 .5z" fill="#bbb" stroke="none"/></svg></div></div><div class="row" style="top:257px;height:51px;background:#fff"><div class="d1">16.Sep.2020</div><div class="d2">12:32 PM</div><div style="left:48px;top:8px">PUBLICO EN GENERAL</div><div style="left:248px;top:8px">[112] Matriz</div><div style="right:497px;top:8px">$978.00</div><div style="right:347px;top:8px">$0.00</div><div class="act" style="height:51px;background:#ebedf2"><svg style="left:29.75px" width="12.5" height="12.5" viewBox="0 0 14 14" fill="none" stroke="#4272a8" stroke-width="1.15" stroke-linecap="round" stroke-linejoin="round"><g fill="#4272a8" stroke="none"><rect x="1" y="1.500" width="3.500" height="3.500"/><rect x="5.500" y="1.500" width="3" height="3.500"/><rect x="9.500" y="1.500" width="3.500" height="3.500"/><rect x="1" y="6.500" width="5" height="2"/><rect x="7" y="6.500" width="6" height="2"/><rect x="1" y="10" width="3" height="2.500"/><rect x="5" y="10" width="8" height="2.500"/></g></svg><svg style="left:81.75px" width="12.5" height="12.5" viewBox="0 0 14 14" fill="none" stroke="#4272a8" stroke-width="1.15" stroke-linecap="round" stroke-linejoin="round"><path d="M3 4.500V1h6l2.500 2.500v1M3 10.500V13h8.500v-2.500"/><text x="7" y="9.700" font-size="5" font-family="Liberation Sans,sans-serif" font-weight="700" text-anchor="middle" fill="#4272a8" stroke="none">XML</text></svg><svg style="left:114.75px" width="12.5" height="12.5" viewBox="0 0 14 14" fill="none" stroke="#4272a8" stroke-width="1.15" stroke-linecap="round" stroke-linejoin="round"><path d="M2 1h6.500v12H2z"/><g fill="#4272a8" stroke="none"><rect x="9.500" y="3" width="1.800" height="1.800"/><rect x="11.700" y="3" width="1.500" height="1.800"/><rect x="9.500" y="5.800" width="3.700" height="1.700"/><rect x="9.500" y="8.500" width="1.800" height="3"/><rect x="12" y="9" width="1.200" height="2.500"/><rect x="4" y="6" width="3" height="3"/></g></svg><svg style="left:146.75px" width="12.5" height="12.5" viewBox="0 0 14 14" fill="none" stroke="#4272a8" stroke-width="1.15" stroke-linecap="round" stroke-linejoin="round"><path d="M3 4.500V1h6l2.500 2.500v1M3 10.500V13h8.500v-2.500"/><text x="7" y="9.700" font-size="5" font-family="Liberation Sans,sans-serif" font-weight="700" text-anchor="middle" fill="#4272a8" stroke="none">PDF</text></svg><svg style="left:178.75px" width="12.5" height="12.5" viewBox="0 0 14 14" fill="none" stroke="#4272a8" stroke-width="1.15" stroke-linecap="round" stroke-linejoin="round"><path d="M1.500 10L3 6l7-3.500 3 4.500-7.500 4z"/><path d="M2 12.500l4-1.500"/><circle cx="9.600" cy="5.300" r=".8"/></svg><svg style="left:210.75px" width="12.5" height="12.5" viewBox="0 0 14 14" fill="none" stroke="#4272a8" stroke-width="1.15" stroke-linecap="round" stroke-linejoin="round"><path d="M1 12V2h4l1.500 1.500H11V6"/><path d="M1 12l2.500-6H13.500L11 12z" fill="#e6effa"/></svg><svg style="left:243.75px" width="12.5" height="12.5" viewBox="0 0 14 14" fill="none" stroke="#4272a8" stroke-width="1.15" stroke-linecap="round" stroke-linejoin="round"><path d="M4 10.800H1.500V3l2-2H9v1.800"/><path d="M4.500 5l2-2.200h6V13h-8z" fill="#e6effa"/><path d="M6.500 2.800V5h-2"/></svg><svg style="left:275.75px" width="12.5" height="12.5" viewBox="0 0 14 14" fill="none" stroke="#27497f" stroke-width="1.15" stroke-linecap="round" stroke-linejoin="round"><path d="M12.300 7V12.500H1.500V2H8" stroke-width="1.200" stroke="#4a6fa3"/><path d="M5.300 8.300l6.200-6.500 1.800 1.700-6.300 6.400-2.300.7z" fill="#27497f" stroke="none"/></svg></div></div><div class="row" style="top:308px;height:51px;background:#fafbfd"><div class="d1">16.Sep.2020</div><div class="d2">12:09 PM</div><div style="left:48px;top:8px">PUBLICO EN GENERAL</div><div style="left:248px;top:8px">[112] Matriz</div><div style="right:497px;top:8px">$978.00</div><div style="right:347px;top:8px">$0.00</div><div class="act" style="height:51px;background:#eef0f5"><svg style="left:29.75px" width="12.5" height="12.5" viewBox="0 0 14 14" fill="none" stroke="#4272a8" stroke-width="1.15" stroke-linecap="round" stroke-linejoin="round"><g fill="#4272a8" stroke="none"><rect x="1" y="1.500" width="3.500" height="3.500"/><rect x="5.500" y="1.500" width="3" height="3.500"/><rect x="9.500" y="1.500" width="3.500" height="3.500"/><rect x="1" y="6.500" width="5" height="2"/><rect x="7" y="6.500" width="6" height="2"/><rect x="1" y="10" width="3" height="2.500"/><rect x="5" y="10" width="8" height="2.500"/></g></svg><svg style="left:81.75px" width="12.5" height="12.5" viewBox="0 0 14 14" fill="none" stroke="#4272a8" stroke-width="1.15" stroke-linecap="round" stroke-linejoin="round"><path d="M3 4.500V1h6l2.500 2.500v1M3 10.500V13h8.500v-2.500"/><text x="7" y="9.700" font-size="5" font-family="Liberation Sans,sans-serif" font-weight="700" text-anchor="middle" fill="#4272a8" stroke="none">XML</text></svg><svg style="left:114.75px" width="12.5" height="12.5" viewBox="0 0 14 14" fill="none" stroke="#4272a8" stroke-width="1.15" stroke-linecap="round" stroke-linejoin="round"><path d="M2 1h6.500v12H2z"/><g fill="#4272a8" stroke="none"><rect x="9.500" y="3" width="1.800" height="1.800"/><rect x="11.700" y="3" width="1.500" height="1.800"/><rect x="9.500" y="5.800" width="3.700" height="1.700"/><rect x="9.500" y="8.500" width="1.800" height="3"/><rect x="12" y="9" width="1.200" height="2.500"/><rect x="4" y="6" width="3" height="3"/></g></svg><svg style="left:146.75px" width="12.5" height="12.5" viewBox="0 0 14 14" fill="none" stroke="#4272a8" stroke-width="1.15" stroke-linecap="round" stroke-linejoin="round"><path d="M3 4.500V1h6l2.500 2.500v1M3 10.500V13h8.500v-2.500"/><text x="7" y="9.700" font-size="5" font-family="Liberation Sans,sans-serif" font-weight="700" text-anchor="middle" fill="#4272a8" stroke="none">PDF</text></svg><svg style="left:178.75px" width="12.5" height="12.5" viewBox="0 0 14 14" fill="none" stroke="#4272a8" stroke-width="1.15" stroke-linecap="round" stroke-linejoin="round"><path d="M1.500 10L3 6l7-3.500 3 4.500-7.500 4z"/><path d="M2 12.500l4-1.500"/><circle cx="9.600" cy="5.300" r=".8"/></svg><svg style="left:210.75px" width="12.5" height="12.5" viewBox="0 0 14 14" fill="none" stroke="#4272a8" stroke-width="1.15" stroke-linecap="round" stroke-linejoin="round"><path d="M1 12V2h4l1.500 1.500H11V6"/><path d="M1 12l2.500-6H13.500L11 12z" fill="#e6effa"/></svg><svg style="left:243.75px" width="12.5" height="12.5" viewBox="0 0 14 14" fill="none" stroke="#4272a8" stroke-width="1.15" stroke-linecap="round" stroke-linejoin="round"><path d="M4 10.800H1.500V3l2-2H9v1.800"/><path d="M4.500 5l2-2.200h6V13h-8z" fill="#e6effa"/><path d="M6.500 2.800V5h-2"/></svg><svg style="left:275.75px" width="12.5" height="12.5" viewBox="0 0 14 14" fill="none" stroke="#27497f" stroke-width="1.15" stroke-linecap="round" stroke-linejoin="round"><path d="M12.300 7V12.500H1.500V2H8" stroke-width="1.200" stroke="#4a6fa3"/><path d="M5.300 8.300l6.200-6.500 1.800 1.700-6.300 6.400-2.300.7z" fill="#27497f" stroke="none"/></svg></div></div><div class="row" style="top:359px;height:51px;background:#fff"><div class="d1">16.Sep.2020</div><div class="d2">12:00 PM</div><div style="left:48px;top:8px">PUBLICO EN GENERAL</div><div style="left:248px;top:8px">[112] Matriz</div><div style="right:497px;top:8px">$978.00</div><div style="right:347px;top:8px">$0.00</div><div class="act" style="height:51px;background:#ebedf2"><svg style="left:29.75px" width="12.5" height="12.5" viewBox="0 0 14 14" fill="none" stroke="#4272a8" stroke-width="1.15" stroke-linecap="round" stroke-linejoin="round"><g fill="#4272a8" stroke="none"><rect x="1" y="1.500" width="3.500" height="3.500"/><rect x="5.500" y="1.500" width="3" height="3.500"/><rect x="9.500" y="1.500" width="3.500" height="3.500"/><rect x="1" y="6.500" width="5" height="2"/><rect x="7" y="6.500" width="6" height="2"/><rect x="1" y="10" width="3" height="2.500"/><rect x="5" y="10" width="8" height="2.500"/></g></svg><svg style="left:81.75px" width="12.5" height="12.5" viewBox="0 0 14 14" fill="none" stroke="#4272a8" stroke-width="1.15" stroke-linecap="round" stroke-linejoin="round"><path d="M3 4.500V1h6l2.500 2.500v1M3 10.500V13h8.500v-2.500"/><text x="7" y="9.700" font-size="5" font-family="Liberation Sans,sans-serif" font-weight="700" text-anchor="middle" fill="#4272a8" stroke="none">XML</text></svg><svg style="left:114.75px" width="12.5" height="12.5" viewBox="0 0 14 14" fill="none" stroke="#4272a8" stroke-width="1.15" stroke-linecap="round" stroke-linejoin="round"><path d="M2 1h6.500v12H2z"/><g fill="#4272a8" stroke="none"><rect x="9.500" y="3" width="1.800" height="1.800"/><rect x="11.700" y="3" width="1.500" height="1.800"/><rect x="9.500" y="5.800" width="3.700" height="1.700"/><rect x="9.500" y="8.500" width="1.800" height="3"/><rect x="12" y="9" width="1.200" height="2.500"/><rect x="4" y="6" width="3" height="3"/></g></svg><svg style="left:146.75px" width="12.5" height="12.5" viewBox="0 0 14 14" fill="none" stroke="#4272a8" stroke-width="1.15" stroke-linecap="round" stroke-linejoin="round"><path d="M3 4.500V1h6l2.500 2.500v1M3 10.500V13h8.500v-2.500"/><text x="7" y="9.700" font-size="5" font-family="Liberation Sans,sans-serif" font-weight="700" text-anchor="middle" fill="#4272a8" stroke="none">PDF</text></svg><svg style="left:178.75px" width="12.5" height="12.5" viewBox="0 0 14 14" fill="none" stroke="#4272a8" stroke-width="1.15" stroke-linecap="round" stroke-linejoin="round"><path d="M1.500 10L3 6l7-3.500 3 4.500-7.500 4z"/><path d="M2 12.500l4-1.500"/><circle cx="9.600" cy="5.300" r=".8"/></svg><svg style="left:210.75px" width="12.5" height="12.5" viewBox="0 0 14 14" fill="none" stroke="#4272a8" stroke-width="1.15" stroke-linecap="round" stroke-linejoin="round"><path d="M1 12V2h4l1.500 1.500H11V6"/><path d="M1 12l2.500-6H13.500L11 12z" fill="#e6effa"/></svg><svg style="left:243.75px" width="12.5" height="12.5" viewBox="0 0 14 14" fill="none" stroke="#4272a8" stroke-width="1.15" stroke-linecap="round" stroke-linejoin="round"><path d="M4 10.800H1.500V3l2-2H9v1.800"/><path d="M4.500 5l2-2.200h6V13h-8z" fill="#e6effa"/><path d="M6.500 2.800V5h-2"/></svg><svg style="left:275.75px" width="12.5" height="12.5" viewBox="0 0 14 14" fill="none" stroke="#27497f" stroke-width="1.15" stroke-linecap="round" stroke-linejoin="round"><path d="M12.300 7V12.500H1.500V2H8" stroke-width="1.200" stroke="#4a6fa3"/><path d="M5.300 8.300l6.200-6.500 1.800 1.700-6.300 6.400-2.300.7z" fill="#27497f" stroke="none"/></svg></div></div><div class="row" style="top:410px;height:51px;background:#fafbfd"><div class="d1">15.Sep.2020</div><div class="d2">05:27 PM</div><div style="left:48px;top:8px">PUBLICO EN GENERAL</div><div style="left:248px;top:8px">[112] Matriz</div><div style="right:497px;top:8px">$978.00</div><div style="right:347px;top:8px">$0.00</div><div class="act" style="height:51px;background:#eef0f5"><svg style="left:29.75px" width="12.5" height="12.5" viewBox="0 0 14 14" fill="none" stroke="#4272a8" stroke-width="1.15" stroke-linecap="round" stroke-linejoin="round"><g fill="#4272a8" stroke="none"><rect x="1" y="1.500" width="3.500" height="3.500"/><rect x="5.500" y="1.500" width="3" height="3.500"/><rect x="9.500" y="1.500" width="3.500" height="3.500"/><rect x="1" y="6.500" width="5" height="2"/><rect x="7" y="6.500" width="6" height="2"/><rect x="1" y="10" width="3" height="2.500"/><rect x="5" y="10" width="8" height="2.500"/></g></svg><svg style="left:81.75px" width="12.5" height="12.5" viewBox="0 0 14 14" fill="none" stroke="#4272a8" stroke-width="1.15" stroke-linecap="round" stroke-linejoin="round"><path d="M3 4.500V1h6l2.500 2.500v1M3 10.500V13h8.500v-2.500"/><text x="7" y="9.700" font-size="5" font-family="Liberation Sans,sans-serif" font-weight="700" text-anchor="middle" fill="#4272a8" stroke="none">XML</text></svg><svg style="left:114.75px" width="12.5" height="12.5" viewBox="0 0 14 14" fill="none" stroke="#4272a8" stroke-width="1.15" stroke-linecap="round" stroke-linejoin="round"><path d="M2 1h6.500v12H2z"/><g fill="#4272a8" stroke="none"><rect x="9.500" y="3" width="1.800" height="1.800"/><rect x="11.700" y="3" width="1.500" height="1.800"/><rect x="9.500" y="5.800" width="3.700" height="1.700"/><rect x="9.500" y="8.500" width="1.800" height="3"/><rect x="12" y="9" width="1.200" height="2.500"/><rect x="4" y="6" width="3" height="3"/></g></svg><svg style="left:146.75px" width="12.5" height="12.5" viewBox="0 0 14 14" fill="none" stroke="#4272a8" stroke-width="1.15" stroke-linecap="round" stroke-linejoin="round"><path d="M3 4.500V1h6l2.500 2.500v1M3 10.500V13h8.500v-2.500"/><text x="7" y="9.700" font-size="5" font-family="Liberation Sans,sans-serif" font-weight="700" text-anchor="middle" fill="#4272a8" stroke="none">PDF</text></svg><svg style="left:178.75px" width="12.5" height="12.5" viewBox="0 0 14 14" fill="none" stroke="#4272a8" stroke-width="1.15" stroke-linecap="round" stroke-linejoin="round"><path d="M1.500 10L3 6l7-3.500 3 4.500-7.500 4z"/><path d="M2 12.500l4-1.500"/><circle cx="9.600" cy="5.300" r=".8"/></svg><svg style="left:210.75px" width="12.5" height="12.5" viewBox="0 0 14 14" fill="none" stroke="#4272a8" stroke-width="1.15" stroke-linecap="round" stroke-linejoin="round"><path d="M1 12V2h4l1.500 1.500H11V6"/><path d="M1 12l2.500-6H13.500L11 12z" fill="#e6effa"/></svg><svg style="left:243.75px" width="12.5" height="12.5" viewBox="0 0 14 14" fill="none" stroke="#4272a8" stroke-width="1.15" stroke-linecap="round" stroke-linejoin="round"><path d="M4 10.800H1.500V3l2-2H9v1.800"/><path d="M4.500 5l2-2.200h6V13h-8z" fill="#e6effa"/><path d="M6.500 2.800V5h-2"/></svg><svg style="left:275.75px" width="12.5" height="12.5" viewBox="0 0 14 14" fill="none" stroke="#27497f" stroke-width="1.15" stroke-linecap="round" stroke-linejoin="round"><path d="M12.300 7V12.500H1.500V2H8" stroke-width="1.200" stroke="#4a6fa3"/><path d="M5.300 8.300l6.200-6.500 1.800 1.700-6.300 6.400-2.300.7z" fill="#27497f" stroke="none"/></svg></div></div><div class="row" style="top:461px;height:51px;background:#fff"><div class="d1">15.Sep.2020</div><div class="d2">11:37 AM</div><div style="left:48px;top:8px">PUBLICO EN GENERAL</div><div style="left:248px;top:8px">[112] Matriz</div><div style="right:497px;top:8px">$4202.24</div><div style="right:347px;top:8px">$231.12</div><div class="act" style="height:51px;background:#ebedf2"><svg style="left:29.75px" width="12.5" height="12.5" viewBox="0 0 14 14" fill="none" stroke="#4272a8" stroke-width="1.15" stroke-linecap="round" stroke-linejoin="round"><g fill="#4272a8" stroke="none"><rect x="1" y="1.500" width="3.500" height="3.500"/><rect x="5.500" y="1.500" width="3" height="3.500"/><rect x="9.500" y="1.500" width="3.500" height="3.500"/><rect x="1" y="6.500" width="5" height="2"/><rect x="7" y="6.500" width="6" height="2"/><rect x="1" y="10" width="3" height="2.500"/><rect x="5" y="10" width="8" height="2.500"/></g></svg><svg style="left:81.75px" width="12.5" height="12.5" viewBox="0 0 14 14" fill="none" stroke="#4272a8" stroke-width="1.15" stroke-linecap="round" stroke-linejoin="round"><path d="M3 4.500V1h6l2.500 2.500v1M3 10.500V13h8.500v-2.500"/><text x="7" y="9.700" font-size="5" font-family="Liberation Sans,sans-serif" font-weight="700" text-anchor="middle" fill="#4272a8" stroke="none">XML</text></svg><svg style="left:114.75px" width="12.5" height="12.5" viewBox="0 0 14 14" fill="none" stroke="#4272a8" stroke-width="1.15" stroke-linecap="round" stroke-linejoin="round"><path d="M2 1h6.500v12H2z"/><g fill="#4272a8" stroke="none"><rect x="9.500" y="3" width="1.800" height="1.800"/><rect x="11.700" y="3" width="1.500" height="1.800"/><rect x="9.500" y="5.800" width="3.700" height="1.700"/><rect x="9.500" y="8.500" width="1.800" height="3"/><rect x="12" y="9" width="1.200" height="2.500"/><rect x="4" y="6" width="3" height="3"/></g></svg><svg style="left:146.75px" width="12.5" height="12.5" viewBox="0 0 14 14" fill="none" stroke="#4272a8" stroke-width="1.15" stroke-linecap="round" stroke-linejoin="round"><path d="M3 4.500V1h6l2.500 2.500v1M3 10.500V13h8.500v-2.500"/><text x="7" y="9.700" font-size="5" font-family="Liberation Sans,sans-serif" font-weight="700" text-anchor="middle" fill="#4272a8" stroke="none">PDF</text></svg><svg style="left:178.75px" width="12.5" height="12.5" viewBox="0 0 14 14" fill="none" stroke="#4272a8" stroke-width="1.15" stroke-linecap="round" stroke-linejoin="round"><path d="M1.500 10L3 6l7-3.500 3 4.500-7.500 4z"/><path d="M2 12.500l4-1.500"/><circle cx="9.600" cy="5.300" r=".8"/></svg><svg style="left:210.75px" width="12.5" height="12.5" viewBox="0 0 14 14" fill="none" stroke="#4272a8" stroke-width="1.15" stroke-linecap="round" stroke-linejoin="round"><path d="M1 12V2h4l1.500 1.500H11V6"/><path d="M1 12l2.500-6H13.500L11 12z" fill="#e6effa"/></svg><svg style="left:243.75px" width="12.5" height="12.5" viewBox="0 0 14 14" fill="none" stroke="#4272a8" stroke-width="1.15" stroke-linecap="round" stroke-linejoin="round"><path d="M4 10.800H1.500V3l2-2H9v1.800"/><path d="M4.500 5l2-2.200h6V13h-8z" fill="#e6effa"/><path d="M6.500 2.800V5h-2"/></svg><svg style="left:275.75px" width="12.5" height="12.5" viewBox="0 0 14 14" fill="none" stroke="#27497f" stroke-width="1.15" stroke-linecap="round" stroke-linejoin="round"><path d="M12.300 7V12.500H1.500V2H8" stroke-width="1.200" stroke="#4a6fa3"/><path d="M5.300 8.300l6.200-6.500 1.800 1.700-6.300 6.400-2.300.7z" fill="#27497f" stroke="none"/></svg></div></div><div class="row" style="top:512px;height:51px;background:#fafbfd"><div class="d1">14.Ago.2020</div><div class="d2">10:00 AM</div><div style="left:48px;top:8px">PUBLICO EN GENERAL</div><div style="left:248px;top:8px">[112] Matriz</div><div style="right:497px;top:8px">$978.00</div><div style="right:347px;top:8px">$0.00</div><div class="act" style="height:51px;background:#eef0f5"><svg style="left:10.75px" width="12.5" height="12.5" viewBox="0 0 14 14" fill="none" stroke="#4272a8" stroke-width="1.15" stroke-linecap="round" stroke-linejoin="round"><path d="M1 7c2.500-4 9.500-4 12 0-2.500 4-9.500 4-12 0z"/><circle cx="7" cy="7" r="2.100" fill="#4272a8"/><circle cx="6.300" cy="6.300" r=".8" fill="#ebedf3" stroke="none"/></svg><svg style="left:47.75px" width="12.5" height="12.5" viewBox="0 0 14 14" fill="none" stroke="#e0737a" stroke-width="1.15" stroke-linecap="round" stroke-linejoin="round"><circle cx="7" cy="7" r="5.300" fill="#f8dcdf"/><path d="M3.300 10.700l7.400-7.400"/></svg><svg style="left:81.75px" width="12.5" height="12.5" viewBox="0 0 14 14" fill="none" stroke="#4272a8" stroke-width="1.15" stroke-linecap="round" stroke-linejoin="round"><path d="M3 4.500V1h6l2.500 2.500v1M3 10.500V13h8.500v-2.500"/><text x="7" y="9.700" font-size="5" font-family="Liberation Sans,sans-serif" font-weight="700" text-anchor="middle" fill="#4272a8" stroke="none">XML</text></svg><svg style="left:114.75px" width="12.5" height="12.5" viewBox="0 0 14 14" fill="none" stroke="#4272a8" stroke-width="1.15" stroke-linecap="round" stroke-linejoin="round"><path d="M2 1h6.500v12H2z"/><g fill="#4272a8" stroke="none"><rect x="9.500" y="3" width="1.800" height="1.800"/><rect x="11.700" y="3" width="1.500" height="1.800"/><rect x="9.500" y="5.800" width="3.700" height="1.700"/><rect x="9.500" y="8.500" width="1.800" height="3"/><rect x="12" y="9" width="1.200" height="2.500"/><rect x="4" y="6" width="3" height="3"/></g></svg><svg style="left:146.75px" width="12.5" height="12.5" viewBox="0 0 14 14" fill="none" stroke="#4272a8" stroke-width="1.15" stroke-linecap="round" stroke-linejoin="round"><path d="M3 4.500V1h6l2.500 2.500v1M3 10.500V13h8.500v-2.500"/><text x="7" y="9.700" font-size="5" font-family="Liberation Sans,sans-serif" font-weight="700" text-anchor="middle" fill="#4272a8" stroke="none">PDF</text></svg><svg style="left:178.75px" width="12.5" height="12.5" viewBox="0 0 14 14" fill="none" stroke="#4272a8" stroke-width="1.15" stroke-linecap="round" stroke-linejoin="round"><path d="M1.500 10L3 6l7-3.500 3 4.500-7.500 4z"/><path d="M2 12.500l4-1.500"/><circle cx="9.600" cy="5.300" r=".8"/></svg><svg style="left:210.75px" width="12.5" height="12.5" viewBox="0 0 14 14" fill="none" stroke="#4272a8" stroke-width="1.15" stroke-linecap="round" stroke-linejoin="round"><path d="M1 12V2h4l1.500 1.500H11V6"/><path d="M1 12l2.500-6H13.500L11 12z" fill="#e6effa"/></svg><svg style="left:243.75px" width="12.5" height="12.5" viewBox="0 0 14 14" fill="none" stroke="#4272a8" stroke-width="1.15" stroke-linecap="round" stroke-linejoin="round"><path d="M4 10.800H1.500V3l2-2H9v1.800"/><path d="M4.500 5l2-2.200h6V13h-8z" fill="#e6effa"/><path d="M6.500 2.800V5h-2"/></svg><svg style="left:275.75px" width="12.5" height="12.5" viewBox="0 0 14 14" fill="none" stroke="#b9b9b9" stroke-width="1.15" stroke-linecap="round" stroke-linejoin="round"><path d="M12 7.500V12.500H1.500V2H7" stroke-width="1.300"/><path d="M5.500 8.500l6-6 1.500 1.500-6 6-2 .5z" fill="#bbb" stroke="none"/></svg></div></div><div class="row" style="top:563px;height:47px;background:#fff"><div class="d1">11.Ago.2020</div><div class="d2">01:36 PM</div><div style="left:48px;top:8px">PUBLICO EN GENERAL</div><div style="left:248px;top:8px">[112] Matriz</div><div style="right:497px;top:8px">$978.00</div><div style="right:347px;top:8px">$0.00</div><div class="act" style="height:47px;background:#ebedf2"><svg style="left:29.75px" width="12.5" height="12.5" viewBox="0 0 14 14" fill="none" stroke="#4272a8" stroke-width="1.15" stroke-linecap="round" stroke-linejoin="round"><g fill="#4272a8" stroke="none"><rect x="1" y="1.500" width="3.500" height="3.500"/><rect x="5.500" y="1.500" width="3" height="3.500"/><rect x="9.500" y="1.500" width="3.500" height="3.500"/><rect x="1" y="6.500" width="5" height="2"/><rect x="7" y="6.500" width="6" height="2"/><rect x="1" y="10" width="3" height="2.500"/><rect x="5" y="10" width="8" height="2.500"/></g></svg><svg style="left:81.75px" width="12.5" height="12.5" viewBox="0 0 14 14" fill="none" stroke="#4272a8" stroke-width="1.15" stroke-linecap="round" stroke-linejoin="round"><path d="M3 4.500V1h6l2.500 2.500v1M3 10.500V13h8.500v-2.500"/><text x="7" y="9.700" font-size="5" font-family="Liberation Sans,sans-serif" font-weight="700" text-anchor="middle" fill="#4272a8" stroke="none">XML</text></svg><svg style="left:114.75px" width="12.5" height="12.5" viewBox="0 0 14 14" fill="none" stroke="#4272a8" stroke-width="1.15" stroke-linecap="round" stroke-linejoin="round"><path d="M2 1h6.500v12H2z"/><g fill="#4272a8" stroke="none"><rect x="9.500" y="3" width="1.800" height="1.800"/><rect x="11.700" y="3" width="1.500" height="1.800"/><rect x="9.500" y="5.800" width="3.700" height="1.700"/><rect x="9.500" y="8.500" width="1.800" height="3"/><rect x="12" y="9" width="1.200" height="2.500"/><rect x="4" y="6" width="3" height="3"/></g></svg><svg style="left:146.75px" width="12.5" height="12.5" viewBox="0 0 14 14" fill="none" stroke="#4272a8" stroke-width="1.15" stroke-linecap="round" stroke-linejoin="round"><path d="M3 4.500V1h6l2.500 2.500v1M3 10.500V13h8.500v-2.500"/><text x="7" y="9.700" font-size="5" font-family="Liberation Sans,sans-serif" font-weight="700" text-anchor="middle" fill="#4272a8" stroke="none">PDF</text></svg><svg style="left:178.75px" width="12.5" height="12.5" viewBox="0 0 14 14" fill="none" stroke="#4272a8" stroke-width="1.15" stroke-linecap="round" stroke-linejoin="round"><path d="M1.500 10L3 6l7-3.500 3 4.500-7.500 4z"/><path d="M2 12.500l4-1.500"/><circle cx="9.600" cy="5.300" r=".8"/></svg><svg style="left:210.75px" width="12.5" height="12.5" viewBox="0 0 14 14" fill="none" stroke="#4272a8" stroke-width="1.15" stroke-linecap="round" stroke-linejoin="round"><path d="M1 12V2h4l1.500 1.500H11V6"/><path d="M1 12l2.500-6H13.500L11 12z" fill="#e6effa"/></svg><svg style="left:243.75px" width="12.5" height="12.5" viewBox="0 0 14 14" fill="none" stroke="#4272a8" stroke-width="1.15" stroke-linecap="round" stroke-linejoin="round"><path d="M4 10.800H1.500V3l2-2H9v1.800"/><path d="M4.500 5l2-2.200h6V13h-8z" fill="#e6effa"/><path d="M6.500 2.800V5h-2"/></svg><svg style="left:275.75px" width="12.5" height="12.5" viewBox="0 0 14 14" fill="none" stroke="#27497f" stroke-width="1.15" stroke-linecap="round" stroke-linejoin="round"><path d="M12.300 7V12.500H1.500V2H8" stroke-width="1.200" stroke="#4a6fa3"/><path d="M5.300 8.300l6.200-6.500 1.800 1.700-6.300 6.400-2.300.7z" fill="#27497f" stroke="none"/></svg></div></div><div class="row" style="top:610px;height:51px;background:#fafbfd"><div class="d1">11.Ago.2020</div><div class="d2">01:10 PM</div><div style="left:48px;top:8px">PUBLICO EN GENERAL</div><div style="left:248px;top:8px">[112] Matriz</div><div style="right:497px;top:8px">$978.00</div><div style="right:347px;top:8px">$0.00</div><div class="act" style="height:51px;background:#eef0f5"><svg style="left:29.75px" width="12.5" height="12.5" viewBox="0 0 14 14" fill="none" stroke="#4272a8" stroke-width="1.15" stroke-linecap="round" stroke-linejoin="round"><g fill="#4272a8" stroke="none"><rect x="1" y="1.500" width="3.500" height="3.500"/><rect x="5.500" y="1.500" width="3" height="3.500"/><rect x="9.500" y="1.500" width="3.500" height="3.500"/><rect x="1" y="6.500" width="5" height="2"/><rect x="7" y="6.500" width="6" height="2"/><rect x="1" y="10" width="3" height="2.500"/><rect x="5" y="10" width="8" height="2.500"/></g></svg><svg style="left:81.75px" width="12.5" height="12.5" viewBox="0 0 14 14" fill="none" stroke="#4272a8" stroke-width="1.15" stroke-linecap="round" stroke-linejoin="round"><path d="M3 4.500V1h6l2.500 2.500v1M3 10.500V13h8.500v-2.500"/><text x="7" y="9.700" font-size="5" font-family="Liberation Sans,sans-serif" font-weight="700" text-anchor="middle" fill="#4272a8" stroke="none">XML</text></svg><svg style="left:114.75px" width="12.5" height="12.5" viewBox="0 0 14 14" fill="none" stroke="#4272a8" stroke-width="1.15" stroke-linecap="round" stroke-linejoin="round"><path d="M2 1h6.500v12H2z"/><g fill="#4272a8" stroke="none"><rect x="9.500" y="3" width="1.800" height="1.800"/><rect x="11.700" y="3" width="1.500" height="1.800"/><rect x="9.500" y="5.800" width="3.700" height="1.700"/><rect x="9.500" y="8.500" width="1.800" height="3"/><rect x="12" y="9" width="1.200" height="2.500"/><rect x="4" y="6" width="3" height="3"/></g></svg><svg style="left:146.75px" width="12.5" height="12.5" viewBox="0 0 14 14" fill="none" stroke="#4272a8" stroke-width="1.15" stroke-linecap="round" stroke-linejoin="round"><path d="M3 4.500V1h6l2.500 2.500v1M3 10.500V13h8.500v-2.500"/><text x="7" y="9.700" font-size="5" font-family="Liberation Sans,sans-serif" font-weight="700" text-anchor="middle" fill="#4272a8" stroke="none">PDF</text></svg><svg style="left:178.75px" width="12.5" height="12.5" viewBox="0 0 14 14" fill="none" stroke="#4272a8" stroke-width="1.15" stroke-linecap="round" stroke-linejoin="round"><path d="M1.500 10L3 6l7-3.500 3 4.500-7.500 4z"/><path d="M2 12.500l4-1.500"/><circle cx="9.600" cy="5.300" r=".8"/></svg><svg style="left:210.75px" width="12.5" height="12.5" viewBox="0 0 14 14" fill="none" stroke="#4272a8" stroke-width="1.15" stroke-linecap="round" stroke-linejoin="round"><path d="M1 12V2h4l1.500 1.500H11V6"/><path d="M1 12l2.500-6H13.500L11 12z" fill="#e6effa"/></svg><svg style="left:243.75px" width="12.5" height="12.5" viewBox="0 0 14 14" fill="none" stroke="#4272a8" stroke-width="1.15" stroke-linecap="round" stroke-linejoin="round"><path d="M4 10.800H1.500V3l2-2H9v1.800"/><path d="M4.500 5l2-2.200h6V13h-8z" fill="#e6effa"/><path d="M6.500 2.800V5h-2"/></svg><svg style="left:275.75px" width="12.5" height="12.5" viewBox="0 0 14 14" fill="none" stroke="#27497f" stroke-width="1.15" stroke-linecap="round" stroke-linejoin="round"><path d="M12.300 7V12.500H1.500V2H8" stroke-width="1.200" stroke="#4a6fa3"/><path d="M5.300 8.300l6.200-6.500 1.800 1.700-6.300 6.400-2.300.7z" fill="#27497f" stroke="none"/></svg></div></div><div class="vl" style="left:39px"></div><div class="vl" style="left:239px"></div><div class="vl" style="left:414px"></div><div class="vl" style="left:564px"></div><div class="vl" style="left:714px"></div><div class="abs" style="left:0;top:660px;width:1053px;height:1px;background:#e6e8ee"></div><div class="abs" style="left:177px;top:662px;width:212px;height:9px;border-radius:5px;background:#8e96a2"></div><div class="abs" style="left:1053px;top:408px;width:10px;height:254px;border-radius:5px;background:#8e96a2"></div></div>
<div id="bot" class="abs"></div><div class="bb" style="left:851px;width:76px;background:#17a9ab"><svg class="abs" style="left:19px;top:10px" width="9" height="10" viewBox="0 0 9 10"><path d="M0 0l9 5-9 5z" fill="#fff"/></svg><span class="abs" style="left:36px">Tour</span></div><div class="bb" style="left:927px;width:196px;background:#101d3a"></div><svg class="abs" style="left:944px;top:804px" width="11" height="13" viewBox="0 0 11 13"><path d="M1 1.500h9v11.500H1z" fill="#fff"/><rect x="3.500" y="0" width="4" height="3" rx=".8" fill="#fff" stroke="#101d3a" stroke-width=".8"/><path d="M3 6h5M3 8.300h5M3 10.500h3.500" stroke="#101d3a" stroke-width="1"/></svg><div class="bb" style="left:961px">Reportes</div><svg class="abs" style="left:1044px;top:805px" width="15" height="12" viewBox="0 0 15 12"><rect width="15" height="12" rx="1.500" fill="#fff"/><path d="M5.500 3l5 3-5 3z" fill="#101d3a"/></svg><svg class="abs" style="left:1092px;top:805px" width="15" height="12" viewBox="0 0 15 12" fill="#fff"><path d="M9 0l6 4.500L9 9V6.200C5 6.200 2.500 7.500 1 11 1 6 4 3.200 9 2.800z"/></svg><div class="bb" style="left:1123px;width:44px;background:#62b35b"><svg class="abs" style="left:14px;top:7px" width="15" height="15" viewBox="0 0 15 15" fill="none" stroke="#fff" stroke-width="1.500"><path d="M7.600 1.200a6.200 6.200 0 00-5.300 9.400L1.300 13.800l3.300-.9a6.200 6.200 0 103-11.700z"/><path d="M5.300 4.600c-.6.500-.6 1.500.3 2.900s2.400 2.600 3.600 2.800c.8.100 1.400-.4 1.500-1l-1.400-.8-.7.600c-.8-.3-1.700-1.200-2.100-2l.6-.7-.7-1.600z" fill="#fff" stroke="none"/></svg></div><div class="bb" style="left:1167px;width:45px;background:#b79b5f"><svg class="abs" style="left:15px;top:8px" width="14" height="14" viewBox="0 0 14 14"><path d="M5.800 0h2.400l.4 1.800 1.200.5L11.400 1.300l1.700 1.700-1 1.600.5 1.200L14.400 5.800v2.400l-1.800.4-.5 1.200 1 1.600-1.700 1.700-1.600-1-1.200.5L8.200 14H5.800l-.4-1.800-1.200-.5-1.600 1L.9 11l1-1.600-.5-1.200L-.4 8.200V5.800l1.800-.4.5-1.200-1-1.600L2.600.9l1.600 1 1.200-.5z" fill="#fff"/><circle cx="7" cy="7" r="2.200" fill="#b79b5f"/></svg></div><div class="bb" style="left:1212px;width:90px;background:#101d3a"><span class="abs" style="left:5px;top:6px;width:1px;height:16px;background:#3a4560"></span><span class="abs" style="left:19px">01:04 p. m.</span></div></body></html>
